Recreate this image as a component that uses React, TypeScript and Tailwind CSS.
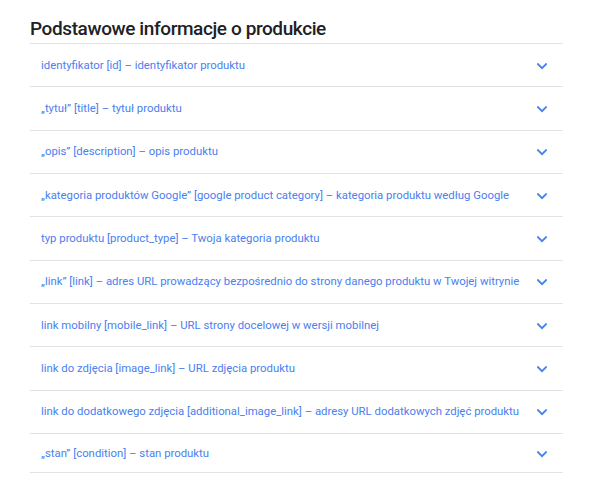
import React from "react";

const items = [
  "identyfikator [id] – identyfikator produktu",
  "„tytuł” [title] – tytuł produktu",
  "„opis” [description] – opis produktu",
  "„kategoria produktów Google” [google product category] – kategoria produktu według Google",
  "typ produktu [product_type] – Twoja kategoria produktu",
  "„link” [link] – adres URL prowadzący bezpośrednio do strony danego produktu w Twojej witrynie",
  "link mobilny [mobile_link] – URL strony docelowej w wersji mobilnej",
  "link do zdjęcia [image_link] – URL zdjęcia produktu",
  "link do dodatkowego zdjęcia [additional_image_link] – adresy URL dodatkowych zdjęć produktu",
  "„stan” [condition] – stan produktu",
];

function Chevron() {
  return (
    <svg width="10" height="7" viewBox="0 0 10 7" className="shrink-0 mt-[2px]">
      <path d="M1 1.2 L5 5.2 L9 1.2" fill="none" stroke="#4a80f0" strokeWidth="1.9" strokeLinecap="square" />
    </svg>
  );
}

export default function App() {
  return (
    <div className="w-[600px] h-[495px] bg-white overflow-hidden" style={{ fontFamily: "Roboto, 'Noto Sans', sans-serif" }}>
      <div className="ml-[30px] w-[533px] pt-[15px]">
        <h2 className="text-[19px] leading-[28px] font-medium tracking-[-0.4px] text-[#202124] border-b border-[#e3e3e3]">
          Podstawowe informacje o produkcie
        </h2>
        {items.map((t, i) => (
          <div
            key={i}
            className={
              "flex items-center justify-between pl-[11px] pr-[16px] border-b border-[#e3e3e3] " +
              (i === items.length - 1 ? "h-[39.5px]" : "h-[43.33px]")
            }
          >
            <span className="text-[11.35px] text-[#4a80f0] whitespace-nowrap">{t}</span>
            <Chevron />
          </div>
        ))}
      </div>
    </div>
  );
}
